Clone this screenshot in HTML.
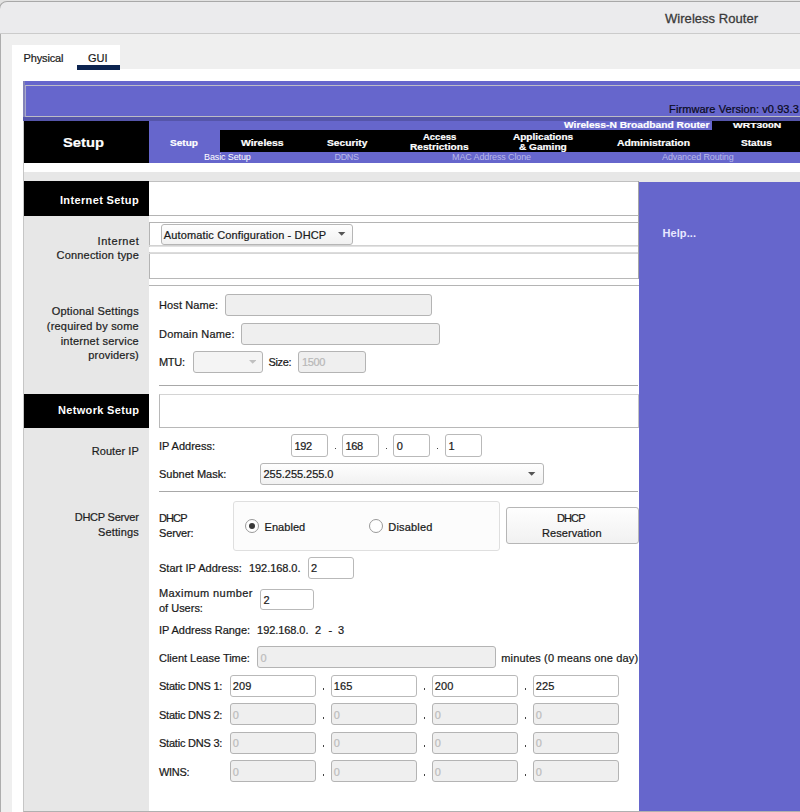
<!DOCTYPE html>
<html><head><meta charset="utf-8"><title>Wireless Router</title>
<style>
html,body{margin:0;padding:0}
body{width:800px;height:812px;overflow:hidden;position:relative;background:#efefef;font-family:"Liberation Sans",sans-serif}
div,span,svg{position:absolute;box-sizing:border-box}
span{white-space:pre}
.in{border:1px solid #b9b9b9;border-radius:3px;background:#fff}
.dis{border:1px solid #b4b4b4;border-radius:3px;background:#efefef}
.cb{border:1px solid #b6b6b6;border-radius:3px;background:linear-gradient(#fefefe,#f1f1f1)}
</style></head><body>
<div style="left:0px;top:0px;width:800px;height:8px;background:#e2e2e2"></div>
<div style="left:-1px;top:1px;width:806px;height:33px;background:#ebebed;border:1px solid #a8a8a8;border-bottom:1px solid #cbcbcb;border-radius:8px 0 0 0"></div>
<div style="left:0px;top:34px;width:1px;height:778px;background:#adadad"></div>
<div style="left:12px;top:45px;width:108px;height:26px;background:#fff"></div>
<div style="left:12px;top:69px;width:788px;height:743px;background:#fff"></div>
<div style="left:77px;top:65px;width:43px;height:5px;background:#0c2450"></div>
<div style="left:23px;top:81px;width:777px;height:731px;background:#fff;border-left:1px solid #c6c6c6;border-bottom:1px solid #b0b0b0"></div>
<div style="left:23px;top:81px;width:777px;height:40px;background:#6666cc;border-left:2px solid #8484b8"></div>
<div style="left:25px;top:85px;width:780px;height:32px;border:1px solid #bcbcc6;border-left-color:#a9a9cc;background:transparent"></div>
<div style="left:23px;top:117px;width:777px;height:4px;background:#5555aa"></div>
<div style="left:24px;top:121px;width:125px;height:42px;background:#000"></div>
<div style="left:149px;top:121px;width:651px;height:42px;background:#6666cc"></div>
<div style="left:712px;top:121px;width:88px;height:10px;background:#000"></div>
<div style="left:220px;top:130px;width:580px;height:22px;background:#000"></div>
<div style="left:24px;top:172px;width:776px;height:10px;background:#e7e7e7"></div>
<div style="left:24px;top:181px;width:125px;height:630px;background:#e7e7e7"></div>
<div style="left:639px;top:182px;width:161px;height:629px;background:#6666cc"></div>
<div style="left:24px;top:181px;width:125px;height:35px;background:#000"></div>
<div style="left:24px;top:394px;width:125px;height:34px;background:#000"></div>
<div style="left:149px;top:181px;width:490px;height:35px;border-top:1px solid #c0c0c0;border-bottom:1px solid #b4b4b4"></div>
<div style="left:149px;top:222px;width:490px;height:25px;border-top:1px solid #b4b4b4;border-left:1px solid #b4b4b4;border-bottom:1px solid #e2e2e2"></div>
<div style="left:149px;top:245px;width:490px;height:1px;background:#d2d2d2"></div>
<div style="left:149px;top:252px;width:490px;height:27px;border-top:1px solid #dcdcdc;border-left:1px solid #b4b4b4;border-bottom:1px solid #b8b8b8"></div>
<div style="left:149px;top:253px;width:490px;height:1px;background:#d6d6d6"></div>
<div style="left:638px;top:181px;width:1px;height:98px;background:#a6a6a6"></div>
<div style="left:149px;top:285px;width:490px;height:1px;background:#b4b4b4"></div>
<div style="left:159px;top:385px;width:479px;height:1px;background:#a8a8a8"></div>
<div style="left:159px;top:394px;width:480px;height:34px;border:1px solid #b8b8b8;border-top-color:#d4d4d4;border-right-color:#c4c4c4"></div>
<div style="left:159px;top:491px;width:479px;height:1px;background:#a8a8a8"></div>
<div class="cb" style="left:161px;top:224px;width:192px;height:21px"></div>
<svg style="left:338.4px;top:232.4px" width="7.4" height="3.8" viewBox="0 0 8 4"><path d="M0 0H8L4 4Z" fill="#555"/></svg>
<div class="dis" style="left:225px;top:294px;width:207px;height:22px"></div>
<div class="dis" style="left:241px;top:322.5px;width:199px;height:22px"></div>
<div class="dis" style="left:192.5px;top:351px;width:70px;height:22px;background:#f4f4f4"></div>
<svg style="left:249px;top:360px" width="7.4" height="3.8" viewBox="0 0 8 4"><path d="M0 0H8L4 4Z" fill="#c0c0c0"/></svg>
<div class="dis" style="left:298px;top:351px;width:68px;height:22px"></div>
<div class="in" style="left:291px;top:434px;width:37px;height:22.5px"></div>
<div class="in" style="left:342px;top:434px;width:37px;height:22.5px"></div>
<div class="in" style="left:393.3px;top:434px;width:37px;height:22.5px"></div>
<div class="in" style="left:444.5px;top:434px;width:37px;height:22.5px"></div>
<div style="left:334.5px;top:447.8px;width:1.3px;height:1.5px;background:#444"></div>
<div style="left:386px;top:447.8px;width:1.3px;height:1.5px;background:#444"></div>
<div style="left:437px;top:447.8px;width:1.3px;height:1.5px;background:#444"></div>
<div class="cb" style="left:260px;top:463px;width:283.5px;height:21.5px"></div>
<svg style="left:528.4px;top:472px" width="7.4" height="3.8" viewBox="0 0 8 4"><path d="M0 0H8L4 4Z" fill="#555"/></svg>
<div style="left:233px;top:501px;width:266.5px;height:49.5px;border:1px solid #dfdfdf;background:#fcfcfc;border-radius:3px"></div>
<div style="left:245px;top:519px;width:14px;height:14px;border:1px solid #999;border-radius:50%;background:#fff"></div>
<div style="left:249px;top:523px;width:6px;height:6px;border-radius:50%;background:#383838"></div>
<div style="left:368.5px;top:519px;width:14px;height:14px;border:1px solid #999;border-radius:50%;background:#fff"></div>
<div class="cb" style="left:506px;top:507px;width:133px;height:36.5px"></div>
<div class="in" style="left:307.5px;top:557px;width:46.5px;height:21.5px"></div>
<div class="in" style="left:260px;top:588.5px;width:54px;height:21.5px"></div>
<div class="dis" style="left:257px;top:646px;width:238.5px;height:22px"></div>
<div class="in" style="left:230px;top:675px;width:86px;height:22px"></div>
<div style="left:323.2px;top:688px;width:1.3px;height:1.5px;background:#444"></div>
<div class="in" style="left:331px;top:675px;width:86px;height:22px"></div>
<div style="left:424.2px;top:688px;width:1.3px;height:1.5px;background:#444"></div>
<div class="in" style="left:432px;top:675px;width:86px;height:22px"></div>
<div style="left:525.2px;top:688px;width:1.3px;height:1.5px;background:#444"></div>
<div class="in" style="left:533px;top:675px;width:86px;height:22px"></div>
<div class="dis" style="left:230px;top:703px;width:86px;height:22px"></div>
<div style="left:323.2px;top:717px;width:1.3px;height:1.5px;background:#444"></div>
<div class="dis" style="left:331px;top:703px;width:86px;height:22px"></div>
<div style="left:424.2px;top:717px;width:1.3px;height:1.5px;background:#444"></div>
<div class="dis" style="left:432px;top:703px;width:86px;height:22px"></div>
<div style="left:525.2px;top:717px;width:1.3px;height:1.5px;background:#444"></div>
<div class="dis" style="left:533px;top:703px;width:86px;height:22px"></div>
<div class="dis" style="left:230px;top:732px;width:86px;height:22px"></div>
<div style="left:323.2px;top:745px;width:1.3px;height:1.5px;background:#444"></div>
<div class="dis" style="left:331px;top:732px;width:86px;height:22px"></div>
<div style="left:424.2px;top:745px;width:1.3px;height:1.5px;background:#444"></div>
<div class="dis" style="left:432px;top:732px;width:86px;height:22px"></div>
<div style="left:525.2px;top:745px;width:1.3px;height:1.5px;background:#444"></div>
<div class="dis" style="left:533px;top:732px;width:86px;height:22px"></div>
<div class="dis" style="left:230px;top:760px;width:86px;height:22px"></div>
<div style="left:323.2px;top:774px;width:1.3px;height:1.5px;background:#444"></div>
<div class="dis" style="left:331px;top:760px;width:86px;height:22px"></div>
<div style="left:424.2px;top:774px;width:1.3px;height:1.5px;background:#444"></div>
<div class="dis" style="left:432px;top:760px;width:86px;height:22px"></div>
<div style="left:525.2px;top:774px;width:1.3px;height:1.5px;background:#444"></div>
<div class="dis" style="left:533px;top:760px;width:86px;height:22px"></div>
<span style="left:665.0px;top:10.0px;font:normal 13px/17px 'Liberation Sans',sans-serif;letter-spacing:0.04px;color:#3a3a3a;-webkit-text-stroke:0.3px #3a3a3a">Wireless Router</span>
<span style="left:23.5px;top:51.49px;font:normal 11px/14px 'Liberation Sans',sans-serif;letter-spacing:-0.14px;color:#1c1c1c;-webkit-text-stroke:0.22px #1c1c1c">Physical</span>
<span style="left:88.0px;top:51.49px;font:normal 11px/14px 'Liberation Sans',sans-serif;letter-spacing:-0.03px;color:#1c1c1c;-webkit-text-stroke:0.22px #1c1c1c">GUI</span>
<span style="left:669.1px;top:102.19px;font:normal 11px/14px 'Liberation Sans',sans-serif;letter-spacing:0.08px;color:#0a0a1c;-webkit-text-stroke:0.22px #0a0a1c">Firmware Version: v0.93.3</span>
<span style="left:62.5px;top:134.0px;font:bold 13px/17px 'Liberation Sans',sans-serif;letter-spacing:0px;color:#fff;transform:scaleX(1.135);transform-origin:0 0;-webkit-text-stroke:0.2px #fff">Setup</span>
<span style="left:563.5px;top:119.48px;font:bold 9px/12px 'Liberation Sans',sans-serif;letter-spacing:0px;color:#fff;transform:scaleX(1.137);transform-origin:0 0;-webkit-text-stroke:0.2px #fff">Wireless-N Broadband Router</span>
<span style="left:732.5px;top:120.83px;font:bold 8px/10px 'Liberation Sans',sans-serif;letter-spacing:0px;color:#fff;transform:scaleX(1.293);transform-origin:0 0;-webkit-text-stroke:0.2px #fff">WRT300N</span>
<span style="left:170.0px;top:136.88px;font:bold 9px/12px 'Liberation Sans',sans-serif;letter-spacing:0px;color:#fff;transform:scaleX(1.119);transform-origin:0 0;-webkit-text-stroke:0.2px #fff">Setup</span>
<span style="left:241.2px;top:136.88px;font:bold 9px/12px 'Liberation Sans',sans-serif;letter-spacing:0px;color:#fff;transform:scaleX(1.153);transform-origin:0 0;-webkit-text-stroke:0.2px #fff">Wireless</span>
<span style="left:326.7px;top:136.88px;font:bold 9px/12px 'Liberation Sans',sans-serif;letter-spacing:0px;color:#fff;transform:scaleX(1.137);transform-origin:0 0;-webkit-text-stroke:0.2px #fff">Security</span>
<span style="left:423.2px;top:130.88px;font:bold 9px/12px 'Liberation Sans',sans-serif;letter-spacing:0px;color:#fff;transform:scaleX(1.053);transform-origin:0 0;-webkit-text-stroke:0.2px #fff">Access</span>
<span style="left:410.2px;top:141.48px;font:bold 9px/12px 'Liberation Sans',sans-serif;letter-spacing:0px;color:#fff;transform:scaleX(1.125);transform-origin:0 0;-webkit-text-stroke:0.2px #fff">Restrictions</span>
<span style="left:513.2px;top:130.88px;font:bold 9px/12px 'Liberation Sans',sans-serif;letter-spacing:0px;color:#fff;transform:scaleX(1.114);transform-origin:0 0;-webkit-text-stroke:0.2px #fff">Applications</span>
<span style="left:519.1px;top:141.48px;font:bold 9px/12px 'Liberation Sans',sans-serif;letter-spacing:0px;color:#fff;transform:scaleX(1.124);transform-origin:0 0;-webkit-text-stroke:0.2px #fff">&amp; Gaming</span>
<span style="left:616.5px;top:136.88px;font:bold 9px/12px 'Liberation Sans',sans-serif;letter-spacing:0px;color:#fff;transform:scaleX(1.149);transform-origin:0 0;-webkit-text-stroke:0.2px #fff">Administration</span>
<span style="left:741.2px;top:136.88px;font:bold 9px/12px 'Liberation Sans',sans-serif;letter-spacing:0px;color:#fff;transform:scaleX(1.119);transform-origin:0 0;-webkit-text-stroke:0.2px #fff">Status</span>
<span style="left:204.0px;top:151.48px;font:normal 9px/12px 'Liberation Sans',sans-serif;letter-spacing:-0.12px;color:#fff;">Basic Setup</span>
<span style="left:334.5px;top:151.48px;font:normal 9px/12px 'Liberation Sans',sans-serif;letter-spacing:-0.34px;color:#b9b9ea;">DDNS</span>
<span style="left:452.1px;top:151.48px;font:normal 9px/12px 'Liberation Sans',sans-serif;letter-spacing:-0.13px;color:#b9b9ea;">MAC Address Clone</span>
<span style="left:662.0px;top:151.48px;font:normal 9px/12px 'Liberation Sans',sans-serif;letter-spacing:-0.12px;color:#b9b9ea;">Advanced Routing</span>
<span style="left:662.5px;top:226.19px;font:bold 11px/14px 'Liberation Sans',sans-serif;letter-spacing:0.08px;color:#e8e8ff;">Help...</span>
<span style="left:59.9px;top:192.59px;font:bold 11px/14px 'Liberation Sans',sans-serif;letter-spacing:0.37px;color:#fff;">Internet Setup</span>
<span style="left:58.0px;top:403.39px;font:bold 11px/14px 'Liberation Sans',sans-serif;letter-spacing:0.33px;color:#fff;">Network Setup</span>
<span style="left:97.5px;top:234.19px;font:normal 11px/14px 'Liberation Sans',sans-serif;letter-spacing:0.57px;color:#1e1e1e;-webkit-text-stroke:0.22px #1e1e1e">Internet</span>
<span style="left:56.5px;top:248.49px;font:normal 11px/14px 'Liberation Sans',sans-serif;letter-spacing:0.2px;color:#1e1e1e;-webkit-text-stroke:0.22px #1e1e1e">Connection type</span>
<span style="left:51.7px;top:303.99px;font:normal 11px/14px 'Liberation Sans',sans-serif;letter-spacing:0.2px;color:#1e1e1e;-webkit-text-stroke:0.22px #1e1e1e">Optional Settings</span>
<span style="left:46.8px;top:318.99px;font:normal 11px/14px 'Liberation Sans',sans-serif;letter-spacing:0.2px;color:#1e1e1e;-webkit-text-stroke:0.22px #1e1e1e">(required by some</span>
<span style="left:60.7px;top:333.79px;font:normal 11px/14px 'Liberation Sans',sans-serif;letter-spacing:0.23px;color:#1e1e1e;-webkit-text-stroke:0.22px #1e1e1e">internet service</span>
<span style="left:88.3px;top:348.39px;font:normal 11px/14px 'Liberation Sans',sans-serif;letter-spacing:0.17px;color:#1e1e1e;-webkit-text-stroke:0.22px #1e1e1e">providers)</span>
<span style="left:91.7px;top:444.19px;font:normal 11px/14px 'Liberation Sans',sans-serif;letter-spacing:0.08px;color:#1e1e1e;-webkit-text-stroke:0.22px #1e1e1e">Router IP</span>
<span style="left:74.7px;top:509.79px;font:normal 11px/14px 'Liberation Sans',sans-serif;letter-spacing:-0.23px;color:#1e1e1e;-webkit-text-stroke:0.22px #1e1e1e">DHCP Server</span>
<span style="left:97.9px;top:524.59px;font:normal 11px/14px 'Liberation Sans',sans-serif;letter-spacing:0.16px;color:#1e1e1e;-webkit-text-stroke:0.22px #1e1e1e">Settings</span>
<span style="left:163.8px;top:228.49px;font:normal 11px/14px 'Liberation Sans',sans-serif;letter-spacing:0.14px;color:#1a1a1a;-webkit-text-stroke:0.22px #1a1a1a">Automatic Configuration - DHCP</span>
<span style="left:159.0px;top:298.49px;font:normal 11px/14px 'Liberation Sans',sans-serif;letter-spacing:0.11px;color:#1a1a1a;-webkit-text-stroke:0.22px #1a1a1a">Host Name:</span>
<span style="left:159.0px;top:326.79px;font:normal 11px/14px 'Liberation Sans',sans-serif;letter-spacing:0.19px;color:#1a1a1a;-webkit-text-stroke:0.22px #1a1a1a">Domain Name:</span>
<span style="left:159.0px;top:355.19px;font:normal 11px/14px 'Liberation Sans',sans-serif;letter-spacing:-0.3px;color:#1a1a1a;-webkit-text-stroke:0.22px #1a1a1a">MTU:</span>
<span style="left:268.5px;top:355.19px;font:normal 11px/14px 'Liberation Sans',sans-serif;letter-spacing:-0.37px;color:#1a1a1a;-webkit-text-stroke:0.22px #1a1a1a">Size:</span>
<span style="left:302.0px;top:355.19px;font:normal 11px/14px 'Liberation Sans',sans-serif;letter-spacing:-0.33px;color:#b8b8b8;-webkit-text-stroke:0.22px #b8b8b8">1500</span>
<span style="left:159.0px;top:438.79px;font:normal 11px/14px 'Liberation Sans',sans-serif;letter-spacing:-0.01px;color:#1a1a1a;-webkit-text-stroke:0.22px #1a1a1a">IP Address:</span>
<span style="left:294.5px;top:439.39px;font:normal 11px/14px 'Liberation Sans',sans-serif;letter-spacing:-0.43px;color:#1a1a1a;-webkit-text-stroke:0.22px #1a1a1a">192</span>
<span style="left:345.5px;top:439.39px;font:normal 11px/14px 'Liberation Sans',sans-serif;letter-spacing:-0.43px;color:#1a1a1a;-webkit-text-stroke:0.22px #1a1a1a">168</span>
<span style="left:396.7px;top:439.39px;font:normal 11px/14px 'Liberation Sans',sans-serif;letter-spacing:0px;color:#1a1a1a;-webkit-text-stroke:0.22px #1a1a1a">0</span>
<span style="left:448.5px;top:439.39px;font:normal 11px/14px 'Liberation Sans',sans-serif;letter-spacing:0px;color:#1a1a1a;-webkit-text-stroke:0.22px #1a1a1a">1</span>
<span style="left:159.0px;top:466.69px;font:normal 11px/14px 'Liberation Sans',sans-serif;letter-spacing:0.0px;color:#1a1a1a;-webkit-text-stroke:0.22px #1a1a1a">Subnet Mask:</span>
<span style="left:263.5px;top:466.69px;font:normal 11px/14px 'Liberation Sans',sans-serif;letter-spacing:-0.03px;color:#1a1a1a;-webkit-text-stroke:0.22px #1a1a1a">255.255.255.0</span>
<span style="left:159.0px;top:511.19px;font:normal 11px/14px 'Liberation Sans',sans-serif;letter-spacing:-0.89px;color:#1a1a1a;-webkit-text-stroke:0.22px #1a1a1a">DHCP</span>
<span style="left:159.0px;top:525.79px;font:normal 11px/14px 'Liberation Sans',sans-serif;letter-spacing:-0.16px;color:#1a1a1a;-webkit-text-stroke:0.22px #1a1a1a">Server:</span>
<span style="left:264.5px;top:519.79px;font:normal 11px/14px 'Liberation Sans',sans-serif;letter-spacing:0.05px;color:#1a1a1a;-webkit-text-stroke:0.22px #1a1a1a">Enabled</span>
<span style="left:388.3px;top:519.79px;font:normal 11px/14px 'Liberation Sans',sans-serif;letter-spacing:0.17px;color:#1a1a1a;-webkit-text-stroke:0.22px #1a1a1a">Disabled</span>
<span style="left:557.0px;top:511.19px;font:normal 11px/14px 'Liberation Sans',sans-serif;letter-spacing:-0.89px;color:#1a1a1a;-webkit-text-stroke:0.22px #1a1a1a">DHCP</span>
<span style="left:542.0px;top:525.69px;font:normal 11px/14px 'Liberation Sans',sans-serif;letter-spacing:0.08px;color:#1a1a1a;-webkit-text-stroke:0.22px #1a1a1a">Reservation</span>
<span style="left:159.0px;top:561.19px;font:normal 11px/14px 'Liberation Sans',sans-serif;letter-spacing:0.03px;color:#1a1a1a;-webkit-text-stroke:0.22px #1a1a1a">Start IP Address:</span>
<span style="left:249.0px;top:561.19px;font:normal 11px/14px 'Liberation Sans',sans-serif;letter-spacing:-0.06px;color:#1a1a1a;-webkit-text-stroke:0.22px #1a1a1a">192.168.0.</span>
<span style="left:311.0px;top:561.19px;font:normal 11px/14px 'Liberation Sans',sans-serif;letter-spacing:0px;color:#1a1a1a;-webkit-text-stroke:0.22px #1a1a1a">2</span>
<span style="left:159.0px;top:586.19px;font:normal 11px/14px 'Liberation Sans',sans-serif;letter-spacing:0.42px;color:#1a1a1a;-webkit-text-stroke:0.22px #1a1a1a">Maximum number</span>
<span style="left:159.0px;top:600.79px;font:normal 11px/14px 'Liberation Sans',sans-serif;letter-spacing:-0.01px;color:#1a1a1a;-webkit-text-stroke:0.22px #1a1a1a">of Users:</span>
<span style="left:263.5px;top:592.69px;font:normal 11px/14px 'Liberation Sans',sans-serif;letter-spacing:0px;color:#1a1a1a;-webkit-text-stroke:0.22px #1a1a1a">2</span>
<span style="left:159.0px;top:623.19px;font:normal 11px/14px 'Liberation Sans',sans-serif;letter-spacing:-0.03px;color:#1a1a1a;-webkit-text-stroke:0.22px #1a1a1a">IP Address Range:</span>
<span style="left:257.1px;top:623.19px;font:normal 11px/14px 'Liberation Sans',sans-serif;letter-spacing:-0.07px;color:#1a1a1a;-webkit-text-stroke:0.22px #1a1a1a">192.168.0.</span>
<span style="left:315.0px;top:623.19px;font:normal 11px/14px 'Liberation Sans',sans-serif;letter-spacing:0px;color:#1a1a1a;-webkit-text-stroke:0.22px #1a1a1a">2</span>
<span style="left:328.5px;top:623.19px;font:normal 11px/14px 'Liberation Sans',sans-serif;letter-spacing:0px;color:#1a1a1a;-webkit-text-stroke:0.22px #1a1a1a">-</span>
<span style="left:338.0px;top:623.19px;font:normal 11px/14px 'Liberation Sans',sans-serif;letter-spacing:0px;color:#1a1a1a;-webkit-text-stroke:0.22px #1a1a1a">3</span>
<span style="left:159.0px;top:650.59px;font:normal 11px/14px 'Liberation Sans',sans-serif;letter-spacing:-0.01px;color:#1a1a1a;-webkit-text-stroke:0.22px #1a1a1a">Client Lease Time:</span>
<span style="left:260.5px;top:650.59px;font:normal 11px/14px 'Liberation Sans',sans-serif;letter-spacing:0px;color:#bcbcbc;-webkit-text-stroke:0.22px #bcbcbc">0</span>
<span style="left:501.3px;top:650.59px;font:normal 11px/14px 'Liberation Sans',sans-serif;letter-spacing:0.15px;color:#1a1a1a;-webkit-text-stroke:0.22px #1a1a1a">minutes (0 means one day)</span>
<span style="left:159.0px;top:679.19px;font:normal 11px/14px 'Liberation Sans',sans-serif;letter-spacing:-0.22px;color:#1a1a1a;-webkit-text-stroke:0.22px #1a1a1a">Static DNS 1:</span>
<span style="left:232.8px;top:679.19px;font:normal 11px/14px 'Liberation Sans',sans-serif;letter-spacing:0.12px;color:#1a1a1a;-webkit-text-stroke:0.22px #1a1a1a">209</span>
<span style="left:333.8px;top:679.19px;font:normal 11px/14px 'Liberation Sans',sans-serif;letter-spacing:0.12px;color:#1a1a1a;-webkit-text-stroke:0.22px #1a1a1a">165</span>
<span style="left:434.8px;top:679.19px;font:normal 11px/14px 'Liberation Sans',sans-serif;letter-spacing:0.12px;color:#1a1a1a;-webkit-text-stroke:0.22px #1a1a1a">200</span>
<span style="left:535.8px;top:679.19px;font:normal 11px/14px 'Liberation Sans',sans-serif;letter-spacing:0.12px;color:#1a1a1a;-webkit-text-stroke:0.22px #1a1a1a">225</span>
<span style="left:159.0px;top:708.19px;font:normal 11px/14px 'Liberation Sans',sans-serif;letter-spacing:-0.22px;color:#1a1a1a;-webkit-text-stroke:0.22px #1a1a1a">Static DNS 2:</span>
<span style="left:232.8px;top:708.19px;font:normal 11px/14px 'Liberation Sans',sans-serif;letter-spacing:0px;color:#bcbcbc;-webkit-text-stroke:0.22px #bcbcbc">0</span>
<span style="left:333.8px;top:708.19px;font:normal 11px/14px 'Liberation Sans',sans-serif;letter-spacing:0px;color:#bcbcbc;-webkit-text-stroke:0.22px #bcbcbc">0</span>
<span style="left:434.8px;top:708.19px;font:normal 11px/14px 'Liberation Sans',sans-serif;letter-spacing:0px;color:#bcbcbc;-webkit-text-stroke:0.22px #bcbcbc">0</span>
<span style="left:535.8px;top:708.19px;font:normal 11px/14px 'Liberation Sans',sans-serif;letter-spacing:0px;color:#bcbcbc;-webkit-text-stroke:0.22px #bcbcbc">0</span>
<span style="left:159.0px;top:736.19px;font:normal 11px/14px 'Liberation Sans',sans-serif;letter-spacing:-0.22px;color:#1a1a1a;-webkit-text-stroke:0.22px #1a1a1a">Static DNS 3:</span>
<span style="left:232.8px;top:736.19px;font:normal 11px/14px 'Liberation Sans',sans-serif;letter-spacing:0px;color:#bcbcbc;-webkit-text-stroke:0.22px #bcbcbc">0</span>
<span style="left:333.8px;top:736.19px;font:normal 11px/14px 'Liberation Sans',sans-serif;letter-spacing:0px;color:#bcbcbc;-webkit-text-stroke:0.22px #bcbcbc">0</span>
<span style="left:434.8px;top:736.19px;font:normal 11px/14px 'Liberation Sans',sans-serif;letter-spacing:0px;color:#bcbcbc;-webkit-text-stroke:0.22px #bcbcbc">0</span>
<span style="left:535.8px;top:736.19px;font:normal 11px/14px 'Liberation Sans',sans-serif;letter-spacing:0px;color:#bcbcbc;-webkit-text-stroke:0.22px #bcbcbc">0</span>
<span style="left:159.0px;top:765.19px;font:normal 11px/14px 'Liberation Sans',sans-serif;letter-spacing:-0.32px;color:#1a1a1a;-webkit-text-stroke:0.22px #1a1a1a">WINS:</span>
<span style="left:232.8px;top:765.19px;font:normal 11px/14px 'Liberation Sans',sans-serif;letter-spacing:0px;color:#bcbcbc;-webkit-text-stroke:0.22px #bcbcbc">0</span>
<span style="left:333.8px;top:765.19px;font:normal 11px/14px 'Liberation Sans',sans-serif;letter-spacing:0px;color:#bcbcbc;-webkit-text-stroke:0.22px #bcbcbc">0</span>
<span style="left:434.8px;top:765.19px;font:normal 11px/14px 'Liberation Sans',sans-serif;letter-spacing:0px;color:#bcbcbc;-webkit-text-stroke:0.22px #bcbcbc">0</span>
<span style="left:535.8px;top:765.19px;font:normal 11px/14px 'Liberation Sans',sans-serif;letter-spacing:0px;color:#bcbcbc;-webkit-text-stroke:0.22px #bcbcbc">0</span>
</body></html>
